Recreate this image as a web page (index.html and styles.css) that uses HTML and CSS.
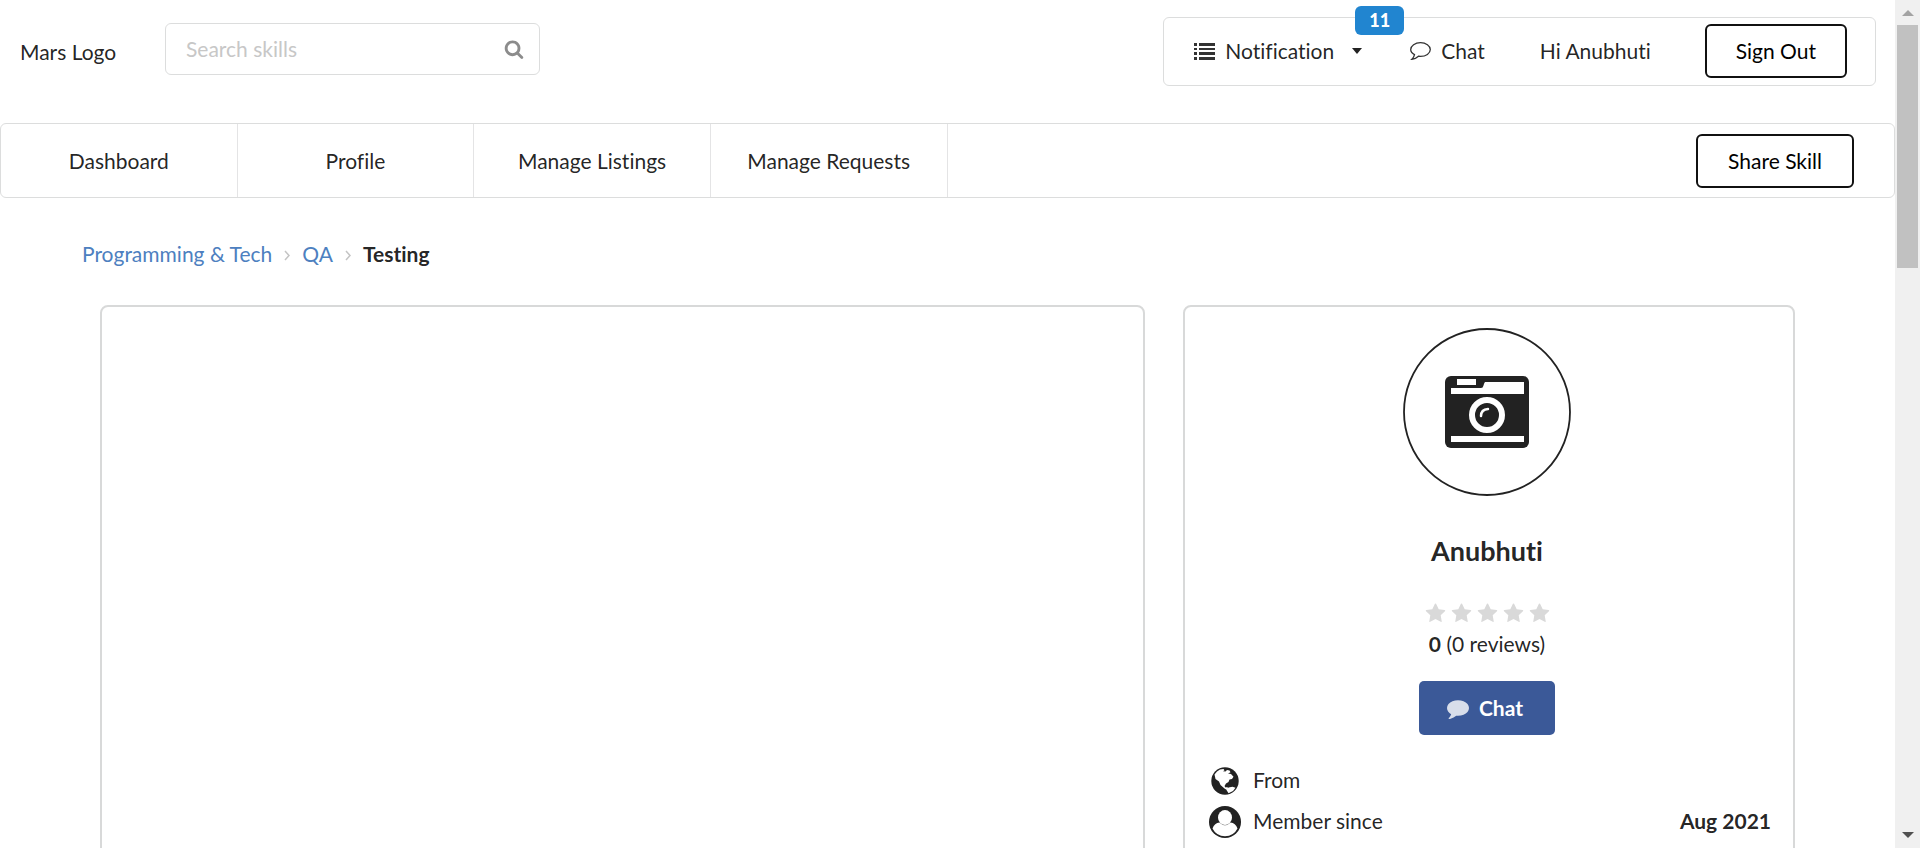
FILE: index.html
```html
<!DOCTYPE html>
<html lang="en">
<head>
<meta charset="utf-8">
<title>Testing</title>
<link rel="stylesheet" href="styles.css">
</head>
<body>
<svg class="sprite" aria-hidden="true">
  <symbol id="comment" viewBox="0 0 1792 1792"><path d="M1792 896q0 174-120 321.5t-326 233-450 85.5q-70 0-145-8-198 175-460 242-49 14-114 22h-5q-15 0-27-10.5t-16-27.5v-1q-3-4-.5-12t2-10 4.5-9.5l6-9 7-8.5 8-9q7-8 31-34.5t34.5-38 31-39.5 32.5-51 27-59 26-76q-157-89-247.5-220t-90.5-281q0-174 120-321.5t326-233 450-85.5 450 85.5 326 233 120 321.5z"/></symbol>
  <symbol id="star" viewBox="0 0 1792 1792"><path d="M1728 647q0 22-26 48l-363 354 86 500q1 7 1 20 0 21-10.5 35.5t-30.5 14.5q-19 0-40-12l-449-236-449 236q-22 12-40 12-21 0-31.5-14.5t-10.5-35.5q0-6 2-20l86-500-364-354q-25-27-25-48 0-37 56-46l502-73 225-455q19-41 49-41t49 41l225 455 502 73q56 9 56 46z"/></symbol>
</svg>
<div class="window">
  <div class="page">
    <header class="top">
      <a class="logo" href="#">Mars Logo</a>
      <form class="search">
        <input class="search-input" type="text" placeholder="Search skills" aria-label="Search skills">
        <button class="search-button" type="button" aria-label="Search">
          <svg class="search-icon" viewBox="0 0 1792 1792"><path d="M1216 832q0-185-131.5-316.5t-316.5-131.5-316.5 131.5-131.5 316.5 131.5 316.5 316.5 131.5 316.5-131.5 131.5-316.5zm512 832q0 52-38 90t-90 38q-54 0-90-38l-343-342q-179 124-399 124-143 0-273.5-55.5t-225-150-150-225-55.5-273.5 55.5-273.5 150-225 225-150 273.5-55.5 273.5 55.5 225 150 150 225 55.5 273.5q0 220-124 399l343 343q37 37 37 90z"/></svg>
        </button>
      </form>
      <div class="account">
        <button class="notification" type="button">
          <svg class="list-icon" viewBox="0 0 21 17"><path d="M0 0h3v3H0zM5 0h16v3H5zM0 5h3v2H0zM5 5h16v2H5zM0 9h3v3H0zM5 9h16v3H5zM0 14h3v3H0zM5 14h16v3H5z"/></svg>
          Notification
          <span class="caret"></span>
          <span class="badge">11</span>
        </button>
        <a class="chat-link" href="#"><svg class="comment-outline" viewBox="0 0 21 18"><path d="M10.500 .7C15.900 .7 20.300 3.800 20.300 7.600S15.900 14.400 10.500 14.400Q9.500 14.400 8.500 14.250Q5.800 16.800 1.900 17.300Q3.900 15.500 4.500 12.700Q.7 10.800 .7 7.600C.7 3.800 5.100 .7 10.500 .7z"/></svg>Chat</a>
        <a class="greeting" href="#">Hi Anubhuti</a>
        <button class="outline-button" type="button">Sign Out</button>
      </div>
    </header>
    <nav class="nav">
      <a class="nav-item" href="#">Dashboard</a>
      <a class="nav-item" href="#">Profile</a>
      <a class="nav-item" href="#">Manage Listings</a>
      <a class="nav-item" href="#">Manage Requests</a>
      <button class="outline-button share" type="button">Share Skill</button>
    </nav>
    <div class="breadcrumb">
      <a href="#">Programming &amp; Tech</a>
      <svg class="chevron" viewBox="0 0 6 11"><path d="M1 1l4 4.500-4 4.500"/></svg>
      <a href="#">QA</a>
      <svg class="chevron" viewBox="0 0 6 11"><path d="M1 1l4 4.500-4 4.500"/></svg>
      <strong>Testing</strong>
    </div>
    <main class="columns">
      <section class="card"></section>
      <section class="card seller">
        <svg class="avatar" viewBox="0 0 168 168">
          <circle cx="84" cy="84" r="83" fill="#fff" stroke="#222" stroke-width="1.800"/>
          <rect x="42" y="48" width="84" height="72" rx="6" fill="#222"/>
          <path d="M54 51h19v6H54zM82 54h39v12H48v-6h30q2 0 2.500-2.500Q81 55 82 54zM48 108h73v6H48z" fill="#fff"/>
          <circle cx="84" cy="87" r="15" fill="#222" stroke="#fff" stroke-width="6"/>
          <path d="M78 88Q78 81.500 85 81" fill="none" stroke="#fff" stroke-width="2.500" stroke-linecap="round"/>
        </svg>
        <h1 class="seller-name">Anubhuti</h1>
        <div class="stars" role="img" aria-label="0 of 5 stars">
          <svg class="star"><use href="#star"/></svg><svg class="star"><use href="#star"/></svg><svg class="star"><use href="#star"/></svg><svg class="star"><use href="#star"/></svg><svg class="star"><use href="#star"/></svg>
        </div>
        <div class="reviews"><strong>0</strong> (0 reviews)</div>
        <button class="chat-button" type="button"><svg class="comment-icon"><use href="#comment"/></svg>Chat</button>
        <div class="facts">
          <div class="fact">
            <svg class="fact-icon" viewBox="0 0 32 32"><circle cx="16" cy="16" r="13.700" fill="#222"/><path d="M5.500 9.500L8 6.500 11 4.500l3.500-.5 1 1.200-1.500 1 2.500.4 1.500-1.600 2.500.6 1 1.700-2.500 1.200 3 .6 2.500 2.600-1.500 2.400-2.500.5-1 2.400-2.500 1.500-1.500 2.500 1 1.500 2-.5.5 2 1.500 1.500-1.500.3-3.500-2.300L11.500 20 10 16.500 6.500 14zM19.500 22.500l4-.8 3 1-2.500 3.300-4.500 2.300L17.500 25z" fill="#fff"/></svg>
            <span>From</span>
          </div>
          <div class="fact">
            <svg class="fact-icon" viewBox="0 0 32 32"><circle cx="16" cy="16" r="16" fill="#222"/><path d="M3.500 22.500Q5.500 17 10.500 16.500Q16 22 21.500 16.500Q26.500 17 28.500 22.500A14 14 0 0 1 3.500 22.500z" fill="#fff"/><ellipse cx="16" cy="11.500" rx="7" ry="7.600" fill="#fff"/></svg>
            <span>Member since</span>
            <strong class="fact-value">Aug 2021</strong>
          </div>
        </div>
      </section>
    </main>
  </div>
  <div class="scrollbar" aria-hidden="true">
    <span class="arrow-up"></span>
    <span class="thumb"></span>
    <span class="arrow-down"></span>
  </div>
</div>
</body>
</html>
```
FILE: styles.css
```css
* { box-sizing: border-box; }
body {
  margin: 0;
  background: #fff;
  color: rgba(0, 0, 0, .87);
  font: 21px/30px Lato, sans-serif;
  font-variant-ligatures: none;
}
a { color: inherit; text-decoration: none; }
button, input { font: inherit; color: inherit; font-variant-ligatures: none; }
button { cursor: pointer; }
.sprite { display: none; }

.window { display: flex; height: 100vh; overflow: hidden; }
.page { flex: 1; min-width: 0; overflow: hidden; }

.top { display: flex; align-items: flex-start; padding: 17px 19px 0 20px; }
.logo { width: 145px; padding-top: 20px; white-space: nowrap; }
.search { position: relative; width: 375px; margin-top: 6px; }
.search-input {
  display: block;
  width: 100%;
  height: 52px;
  padding: 0 48px 2px 20px;
  border: 1px solid #dcdddd;
  border-radius: 6px;
  outline: 0;
}
.search-input::placeholder { color: #c7c7c7; }
.search-button {
  position: absolute;
  inset: 0 0 0 auto;
  display: grid;
  place-items: center;
  width: 52px;
  padding: 0;
  border: 0;
  background: none;
}
.search-icon { width: 20px; height: 20px; fill: #8c8c8c; }

.account {
  display: flex;
  align-items: center;
  height: 69px;
  margin-left: auto;
  padding: 0 28px 1px 30px;
  border: 1px solid #dcdddd;
  border-radius: 6px;
}
.notification {
  position: relative;
  display: flex;
  align-items: center;
  padding: 0;
  border: 0;
  background: none;
}
.list-icon { width: 21px; height: 17px; margin-right: 10px; fill: #333; }
.caret {
  margin-left: 18px;
  border: 5px solid transparent;
  border-top: 6px solid #222;
  border-bottom: 0;
}
.badge {
  position: absolute;
  left: 161px;
  bottom: 31px;
  width: 49px;
  border-radius: 6px;
  background: #2185d0;
  color: #fff;
  font-size: 18px;
  font-weight: 900;
  line-height: 29px;
  text-align: center;
}
.chat-link { display: flex; align-items: center; margin-left: 48px; }
.comment-outline { width: 21px; height: 18px; margin-right: 10px; fill: none; stroke: #333; stroke-width: 1.3; }
.greeting { margin: 0 54px 0 55px; }
.outline-button {
  height: 54px;
  padding: 0 29px;
  border: 2px solid #111;
  border-radius: 6px;
  background: #fff;
  color: #000;
}

.nav {
  display: flex;
  align-items: center;
  height: 75px;
  margin-top: 37px;
  border: 1px solid #dcdddd;
  border-radius: 6px;
}
.nav-item {
  display: grid;
  place-items: center;
  width: 12.5%;
  height: 100%;
  border-right: 1px solid #e4e4e5;
}
.share { margin: 0 40px 0 auto; padding: 0 30px; }

.breadcrumb { display: flex; align-items: center; padding: 41px 82px 0; }
.breadcrumb a { color: #4d80c0; }
.chevron { width: 6px; height: 11px; margin: 2px 12px 0; fill: none; stroke: #c4c4c4; stroke-width: 1.5; }

.columns { display: grid; grid-template-columns: 1045fr 612fr; gap: 38px; padding: 36px 100px 0; }
.card { min-height: 640px; border: 2px solid #d8d9d9; border-radius: 8px; }
.seller { display: flex; flex-direction: column; align-items: center; padding: 21px 26px 21px 22px; }
.avatar { width: 168px; height: 168px; }
.seller-name { margin: 37px 0 0; font-size: 27px; line-height: 36px; font-weight: 700; }
.stars { display: flex; gap: 5px; margin-top: 34px; }
.star { width: 21px; height: 21px; fill: #d9d9d9; }
.reviews { margin-top: 5px; }
.chat-button {
  display: flex;
  align-items: center;
  height: 54px;
  margin-top: 22px;
  padding: 0 32px 0 28px;
  border: 0;
  border-radius: 5px;
  background: #3b5998;
  color: #fff;
  font-weight: 700;
}
.comment-icon { width: 22px; height: 22px; margin-right: 10px; fill: #d8deea; }
.facts { align-self: stretch; margin: 25px -4px 0 2px; }
.fact { display: flex; align-items: center; height: 41px; }
.fact-icon { width: 32px; height: 32px; margin-right: 12px; }
.fact span, .fact strong { padding-bottom: 2px; }
.fact-value { margin-left: auto; }

.scrollbar {
  display: flex;
  flex-direction: column;
  align-items: center;
  width: 25px;
  background: #f0f0f0;
}
.arrow-up { margin: 10px 0 9px; border: 6px solid transparent; border-bottom-color: #a3a3a3; border-top: 0; }
.thumb { width: 21px; height: 28.7%; background: #c1c1c1; }
.arrow-down { margin: auto 0 10px; border: 6px solid transparent; border-top-color: #505050; border-bottom: 0; }
```
